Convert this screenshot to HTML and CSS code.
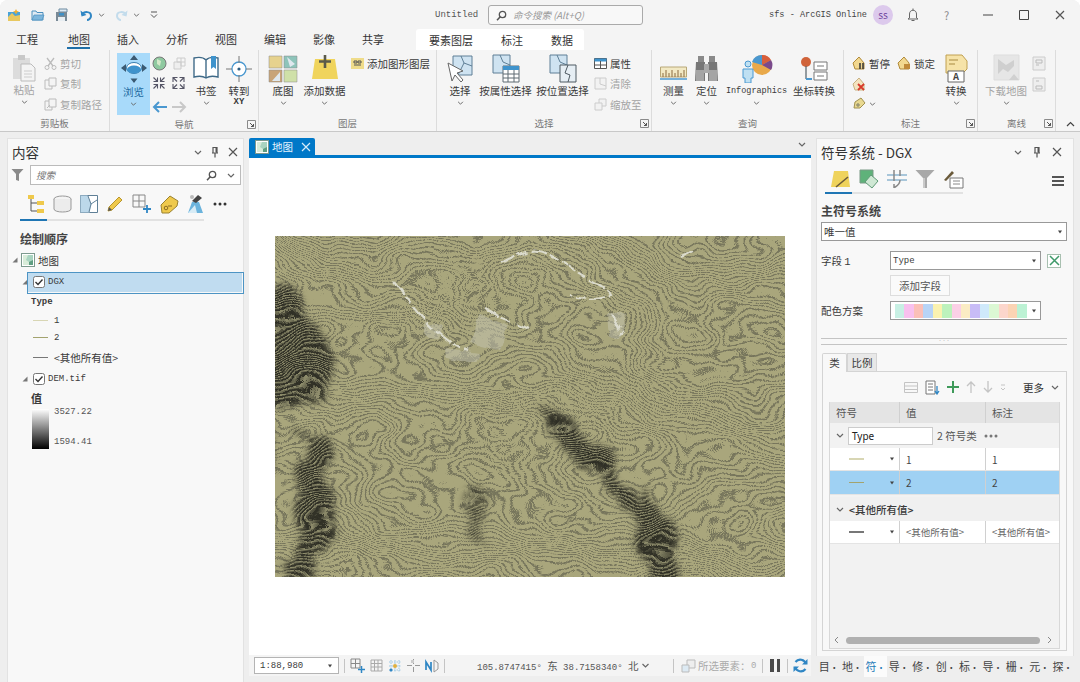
FILE: index.html
```html
<!DOCTYPE html>
<html lang="zh-CN">
<head>
  <meta charset="UTF-8">
  <title>Untitled - ArcGIS Pro</title>
  <link rel="stylesheet" href="styles.css">
</head>
<body>
<svg class="defs" width="0" height="0">
  <symbol id="chev" viewBox="0 0 8 5"><path d="M1 1l3 3 3-3" fill="none" stroke="#666" stroke-width="1.2"/></symbol>
  <symbol id="caret" viewBox="0 0 6 4"><path d="M1 0.5h4l-2 3z" fill="#444"/></symbol>
  <symbol id="tri" viewBox="0 0 6 6"><path d="M5.5 0.5v5h-5z" fill="#777"/></symbol>
  <symbol id="launch" viewBox="0 0 9 9"><path d="M0.5 0.5h8v8h-8z" fill="none" stroke="#8a8a8a"/><path d="M3 3l3.5 3.5M6.5 4v2.500h-2.500" fill="none" stroke="#555"/></symbol>
  <symbol id="close" viewBox="0 0 10 10"><path d="M1 1l8 8M9 1l-8 8" stroke="#555" stroke-width="1.200"/></symbol>
  <symbol id="pin" viewBox="0 0 8 11"><path d="M2 0.500h4v5.500h-4zM1 6h6M4 6v4.500" fill="none" stroke="#555" stroke-width="1.200"/><path d="M4.500 1h1.500v4.500h-1.500z" fill="#555"/></symbol>
  <symbol id="mapicon" viewBox="0 0 14 14"><rect x="0.500" y="0.500" width="13" height="13" fill="#fff" stroke="#7d9a8e"/><rect x="2" y="2" width="10" height="10" fill="#a9d4c0"/><path d="M2 2h5l-2 5 3 2v3h-6z" fill="#d8ecd9"/><path d="M8 9l4-2v5h-4z" fill="#5f9e82"/></symbol>
  <symbol id="check" viewBox="0 0 12 12"><rect x="0.500" y="0.500" width="11" height="11" rx="2" fill="#fff" stroke="#777"/><path d="M2.500 6l2.500 2.500 4.500-5" fill="none" stroke="#333" stroke-width="1.400"/></symbol>
  <symbol id="dots" viewBox="0 0 14 4"><circle cx="2" cy="2" r="1.500"/><circle cx="7" cy="2" r="1.500"/><circle cx="12" cy="2" r="1.500"/></symbol>
</svg>

<div class="app">
  <!-- title bar -->
  <div class="titlebar">
    <div class="qat">
      <svg width="14" height="13" viewBox="0 0 14 13"><path d="M1 3h12v9h-12z" fill="#4aa3d8"/><path d="M1 8l4-4 3 3 5-1v6h-12z" fill="#e8c860"/><path d="M9 0l1 2 2 .5-2 1-1 2-1-2-2-1 2-.5z" fill="#f0b030"/></svg>
      <svg width="14" height="12" viewBox="0 0 14 12"><path d="M1 2h4l1 1.500h6v7.500h-11z" fill="#dfeaf3" stroke="#4a8fbe"/><path d="M1 11l2-5h10l-2 5z" fill="#7db6dc" stroke="#4a8fbe" stroke-width=".7"/></svg>
      <svg width="15" height="14" viewBox="0 0 15 14"><path d="M4 1h8v3h-8z" fill="#dfeaf3" stroke="#6d8aa0"/><path d="M1 4h11v9h-11z" fill="#7a8a96"/><path d="M3 9h7v4h-7z" fill="#e8eef2"/><path d="M4 5h5v2.500h-5z" fill="#3d8fc6"/></svg>
      <span class="qat-arrows">
        <svg width="13" height="12" viewBox="0 0 13 12"><path d="M2 6c2-4 9-4 9 1 0 2-2 4-4 4" fill="none" stroke="#2f86c4" stroke-width="2"/><path d="M0.500 1.500l1 6 5-1.500z" fill="#2f86c4"/></svg>
        <svg class="ch" width="7" height="4"><use href="#chev"/></svg>
      </span>
      <span class="qat-arrows">
        <svg width="13" height="12" viewBox="0 0 13 12"><path d="M11 6c-2-4-9-4-9 1 0 2 2 4 4 4" fill="none" stroke="#c3dcec" stroke-width="2"/><path d="M12.500 1.500l-1 6-5-1.500z" fill="#c3dcec"/></svg>
        <svg class="ch" width="7" height="4"><use href="#chev"/></svg>
      </span>
      <svg width="8" height="8" viewBox="0 0 8 8"><path d="M1 1h6M1 3.500l3 3 3-3" fill="none" stroke="#555"/></svg>
    </div>
    <span class="doc-name latin">Untitled</span>
    <div class="cmd-search">
      <svg width="11" height="11" viewBox="0 0 11 11"><circle cx="6.500" cy="4.500" r="3.200" fill="none" stroke="#555" stroke-width="1.300"/><path d="M4 7l-3 3.200" stroke="#555" stroke-width="1.500"/></svg>
      <span>命令搜索 (Alt+Q)</span>
    </div>
    <div class="title-right">
      <span class="user latin">sfs - ArcGIS Online</span>
      <span class="avatar">SS</span>
      <svg class="bell" width="12" height="14" viewBox="0 0 12 14"><path d="M6 0.500v1.500M2.500 10v-4c0-5 7-5 7 0v4l1.500 1h-10zM4.500 12.500h3" fill="none" stroke="#666"/></svg>
      <span class="help">?</span>
      <span class="win-btns">
        <svg width="10" height="10" viewBox="0 0 10 10"><path d="M0 5h10" stroke="#444"/></svg>
        <svg width="10" height="10" viewBox="0 0 10 10"><path d="M0.500 0.500h9v9h-9z" fill="none" stroke="#444"/></svg>
        <svg width="10" height="10"><use href="#close"/></svg>
      </span>
    </div>
  </div>

  <!-- ribbon tabs -->
  <div class="tabs">
    <span class="tab">工程</span>
    <span class="tab active">地图</span>
    <span class="tab">插入</span>
    <span class="tab">分析</span>
    <span class="tab">视图</span>
    <span class="tab">编辑</span>
    <span class="tab">影像</span>
    <span class="tab">共享</span>
    <div class="ctx-tabs">
      <span>要素图层</span>
      <span>标注</span>
      <span>数据</span>
    </div>
  </div>

  <!-- ribbon -->
  <div class="ribbon">
    <div class="group g-clip">
      <div class="group-body">
        <div class="big off w-paste">
          <svg width="26" height="29" viewBox="0 0 26 29"><path d="M2 5h17v21h-17z" fill="#dcdcdc"/><path d="M7 2h7v5h-7z" fill="#c8c8c8"/><path d="M10 11h10l4 4v13h-14z" fill="#f4f4f4" stroke="#bbb"/><path d="M13 18h8M13 21h8M13 24h8" stroke="#ccc"/></svg>
          <span>粘贴</span>
          <svg class="ch" width="7" height="4"><use href="#chev"/></svg>
        </div>
        <div class="smalls off">
          <div class="small"><svg width="13" height="13" viewBox="0 0 13 13"><path d="M3 1l6 8M10 1l-6 8" stroke="#bbb" stroke-width="1.300"/><circle cx="3" cy="10.500" r="2" fill="none" stroke="#bbb"/><circle cx="10" cy="10.500" r="2" fill="none" stroke="#bbb"/></svg><span>剪切</span></div>
          <div class="small"><svg width="13" height="13" viewBox="0 0 13 13"><path d="M1 3h7v9h-7z" fill="#f4f4f4" stroke="#bbb"/><path d="M5 1h7v8h-7z" fill="#f4f4f4" stroke="#bbb"/></svg><span>复制</span></div>
          <div class="small"><svg width="13" height="13" viewBox="0 0 13 13"><path d="M1 3h7v9h-7z" fill="#f4f4f4" stroke="#bbb"/><path d="M5 1h7v8h-7z" fill="#f4f4f4" stroke="#bbb"/><path d="M3 10l3-3" stroke="#bbb"/></svg><span>复制路径</span></div>
        </div>
      </div>
      <div class="group-foot">剪贴板</div>
    </div>

    <div class="group g-nav">
      <div class="group-body">
        <div class="big explore">
          <svg width="28" height="30" viewBox="0 0 28 30"><ellipse cx="14" cy="14" rx="7.500" ry="5.500" fill="#fff" stroke="#3a7fb0"/><ellipse cx="14" cy="15.500" rx="7" ry="4" fill="#3f93cc"/><path d="M14 1l4 5h-8zM14 29l-3.500-4.500h7zM1 14l5-4v8zM27 14l-5-4v8z" fill="#3b5a72"/></svg>
          <span>浏览</span>
          <svg class="ch" width="7" height="4"><use href="#chev"/></svg>
        </div>
        <div class="nav-tools">
          <div class="nav-row">
            <svg width="15" height="15" viewBox="0 0 15 15"><circle cx="7.500" cy="7.500" r="6.500" fill="#8fc9a0" stroke="#777"/><path d="M5 3l4 2-1 5-3-2z" fill="#d5e9c9"/></svg>
            <svg width="15" height="15" viewBox="0 0 15 15"><path d="M5 2h8v8h-8z" fill="none" stroke="#ccc"/><path d="M2 6h7v7h-7z" fill="#eee" stroke="#ccc"/><path d="M9 2v8M5 6h8" stroke="#ccc"/></svg>
          </div>
          <div class="zoom-arrows">
            <svg width="34" height="14" viewBox="0 0 34 14" fill="none" stroke="#556" stroke-width="1.100"><path d="M1.500 1.500l3.500 3.500M5.500 1.500v4h-4M12.500 1.500l-3.500 3.500M8.500 1.500v4h4M1.500 12.500l3.500-3.500M5.500 12.500v-4h-4M12.500 12.500l-3.500-3.500M8.500 12.500v-4h4M25 5.500l-3.500-3.500M21 6v-4.500h4.500M28 5.500l3.500-3.500M32 6v-4.500h-4.500M25 8.500l-3.500 3.500M21 8v4.500h4.500M28 8.500l3.500 3.500M32 8v4.500h-4.500"/></svg>
          </div>
          <div class="nav-row">
            <svg width="15" height="12" viewBox="0 0 15 12"><path d="M15 6H3M7 1L2 6l5 5" fill="none" stroke="#4a98d0" stroke-width="2"/></svg>
            <svg width="15" height="12" viewBox="0 0 15 12"><path d="M0 6h12M8 1l5 5-5 5" fill="none" stroke="#c8c8c8" stroke-width="2"/></svg>
          </div>
        </div>
        <div class="big w-book">
          <svg width="28" height="29" viewBox="0 0 28 29"><path d="M14 6c-3-3-8-3-12-2v19c4-1 9-1 12 1 3-2 8-2 12-1V4c-4-1-9-1-12 2zM14 6v18" fill="#fff" stroke="#3f6a88" stroke-width="1.400"/><path d="M19 2h5v13l-2.500-2-2.500 2z" fill="#3f93cc"/></svg>
          <span>书签</span>
          <svg class="ch" width="7" height="4"><use href="#chev"/></svg>
        </div>
        <div class="big w-goto">
          <svg width="28" height="29" viewBox="0 0 28 29"><circle cx="14" cy="15" r="7" fill="#fff" stroke="#4a98d0" stroke-width="1.300"/><circle cx="14" cy="15" r="1.600" fill="#2d5c80"/><path d="M14 2v7M14 21v7M1 15h6M21 15h6" stroke="#777"/></svg>
          <span>转到</span>
          <span class="sub latin">XY</span>
        </div>
      </div>
      <div class="group-foot">导航<svg class="launcher" width="9" height="9"><use href="#launch"/></svg></div>
    </div>

    <div class="group g-layer">
      <div class="group-body">
        <div class="big w-base">
          <svg width="30" height="29" viewBox="0 0 30 29"><path d="M1 2h13v12h-13z" fill="#e6d28e" stroke="#888" stroke-width=".5"/><path d="M16 2h13v12h-13z" fill="#8ec4ba" stroke="#888" stroke-width=".5"/><path d="M1 16h13v12h-13z" fill="#c8a478" stroke="#888" stroke-width=".5"/><path d="M16 16h13v12h-13z" fill="#cfe0a8" stroke="#888" stroke-width=".5"/><path d="M19 3l8 7-5 3zM4 27l8-9v9z" fill="#dfe8ee"/></svg>
          <span>底图</span>
          <svg class="ch" width="7" height="4"><use href="#chev"/></svg>
        </div>
        <div class="big w-add">
          <svg width="28" height="29" viewBox="0 0 28 29"><path d="M4 5h20l3 20H1z" fill="#f0d45c"/><path d="M14 1v13M8 7.500h12" stroke="#5a5a4a" stroke-width="2.600"/></svg>
          <span>添加数据</span>
          <svg class="ch" width="7" height="4"><use href="#chev"/></svg>
        </div>
        <div class="smalls">
          <div class="small"><svg width="13" height="11" viewBox="0 0 13 11"><path d="M0 0h13v11h-13z" fill="#efdc8a"/><path d="M3 3h3v2h-3zM7 3h3v2h-3zM3 7h7" fill="none" stroke="#555"/></svg><span>添加图形图层</span></div>
        </div>
      </div>
      <div class="group-foot">图层</div>
    </div>

    <div class="group g-sel">
      <div class="group-body">
        <div class="big w-sel1">
          <svg width="26" height="29" viewBox="0 0 26 29"><path d="M6 2h19v19h-19z" fill="#cfe3f1" stroke="#5f7f96"/><path d="M14 2l3 7 8 3M17 9l-6 12" fill="none" stroke="#5f7f96"/><path d="M1 9l4 18 3-6 6 7 2-2-6-7 6-2z" fill="#fff" stroke="#666"/></svg>
          <span>选择</span>
          <svg class="ch" width="7" height="4"><use href="#chev"/></svg>
        </div>
        <div class="big w-sel2">
          <svg width="28" height="29" viewBox="0 0 28 29"><path d="M1 1h17v18h-17z" fill="#cfe3f1" stroke="#5f7f96"/><path d="M8 1l3 7 7 3" fill="none" stroke="#5f7f96"/><path d="M11 12h16v16h-16z" fill="#fff" stroke="#5f6a72"/><path d="M11 12h16v4h-16z" fill="#3f93cc"/><path d="M11 20h16M11 24h16M16 16v12M22 16v12" stroke="#5f6a72"/></svg>
          <span>按属性选择</span>
        </div>
        <div class="big w-sel3">
          <svg width="28" height="29" viewBox="0 0 28 29"><path d="M1 1h17v18h-17z" fill="#cfe3f1" stroke="#5f7f96"/><path d="M8 1l3 7 7 3" fill="none" stroke="#5f7f96"/><path d="M11 11h16v17h-16z" fill="#e6eef4" stroke="#4f5a62"/><path d="M19 11l-3 8 5 2-2 7" fill="none" stroke="#4f5a62"/></svg>
          <span>按位置选择</span>
        </div>
        <div class="smalls">
          <div class="small"><svg width="13" height="11" viewBox="0 0 13 11"><path d="M0.500 0.500h12v10h-12z" fill="#fff" stroke="#555"/><path d="M0.500 0.500h12v3h-12z" fill="#3f93cc"/><path d="M0.500 7h12M6.500 3v8" stroke="#555"/></svg><span>属性</span></div>
          <div class="small off"><svg width="13" height="13" viewBox="0 0 13 13"><path d="M1 1h11v11h-11z" fill="#f2f2f2" stroke="#ccc"/><path d="M6 1v6l6 2" fill="none" stroke="#ccc"/></svg><span>清除</span></div>
          <div class="small off"><svg width="13" height="13" viewBox="0 0 13 13"><path d="M5 1h7v7h-7z" fill="#f2f2f2" stroke="#ccc"/><path d="M1 5h7v7h-7z" fill="#f2f2f2" stroke="#ccc"/></svg><span>缩放至</span></div>
        </div>
      </div>
      <div class="group-foot">选择<svg class="launcher" width="9" height="9"><use href="#launch"/></svg></div>
    </div>

    <div class="group g-query">
      <div class="group-body">
        <div class="big w-measure">
          <svg width="27" height="29" viewBox="0 0 27 29"><path d="M0.500 13h26v10h-26z" fill="#f2e9c4" stroke="#b8a878"/><path d="M3 19v4M6 16v7M9 19v4M12 16v7M15 19v4M18 16v7M21 19v4M24 16v7" stroke="#8a6a40"/><path d="M0 25h27" stroke="#4a98d0" stroke-width="1.500"/></svg>
          <span>测量</span>
          <svg class="ch" width="7" height="4"><use href="#chev"/></svg>
        </div>
        <div class="big w-locate">
          <svg width="27" height="29" viewBox="0 0 27 29"><path d="M5 2h6v6h-6zM16 2h6v6h-6z" fill="#8a8a8a"/><path d="M3 8h9v19h-10z" fill="#777"/><path d="M15 8h9l1 19h-10z" fill="#777"/><path d="M11 10h5v9h-5z" fill="#aaa"/><path d="M3 16h8v11h-8zM16 16h8v11h-8z" fill="#a5a5a5"/></svg>
          <span>定位</span>
          <svg class="ch" width="7" height="4"><use href="#chev"/></svg>
        </div>
        <div class="big w-info">
          <svg width="32" height="29" viewBox="0 0 32 29"><circle cx="21" cy="11" r="10" fill="#e9a94a"/><path d="M21 11V1a10 10 0 0 1 9 5z" fill="#d85f3c"/><path d="M21 11l9-5a10 10 0 0 1 0 10z" fill="#7a4a8c"/><path d="M21 11L11 8a10 10 0 0 1 10-7z" fill="#4a98d0"/><circle cx="7" cy="10" r="3" fill="#bfe0f2" stroke="#4a98d0"/><path d="M2 15h10v9h-2v5h-6v-5h-2z" fill="#bfe0f2" stroke="#4a98d0"/></svg>
          <span class="latin">Infographics</span>
          <svg class="ch" width="7" height="4"><use href="#chev"/></svg>
        </div>
        <div class="big w-coord">
          <svg width="28" height="29" viewBox="0 0 28 29"><circle cx="6" cy="8" r="5" fill="#d0633a"/><path d="M6 12v13" stroke="#5f6a72" stroke-width="1.300"/><path d="M6 25h6" stroke="#4a98d0" stroke-width="2"/><path d="M14 8h13v8h-13zM14 18h13v8h-13z" fill="#fff" stroke="#777"/><path d="M17 12h7M17 22h7" stroke="#777"/></svg>
          <span>坐标转换</span>
        </div>
      </div>
      <div class="group-foot">查询</div>
    </div>

    <div class="group g-label">
      <div class="group-body">
        <div class="label-tools">
          <div class="label-row">
            <div class="small"><svg width="14" height="14" viewBox="0 0 14 14"><path d="M1 7l6-6 5 6v6h-9z" fill="#f2d890" stroke="#b08a3a"/><path d="M8 7v6M11 7v6" stroke="#333" stroke-width="1.500"/></svg><span>暂停</span></div>
            <div class="small"><svg width="14" height="14" viewBox="0 0 14 14"><path d="M1 7l6-6 5 6v6h-9z" fill="#f2d890" stroke="#b08a3a"/><path d="M7 8h6v5h-6z" fill="#c08a3a"/></svg><span>锁定</span></div>
          </div>
          <div class="small"><svg width="14" height="14" viewBox="0 0 14 14"><path d="M1 7l6-6 5 6v6h-9z" fill="#f4e4c0" stroke="#c8b080"/><path d="M6 7l6 6M12 7l-6 6" stroke="#d83a2a" stroke-width="1.800"/></svg></div>
          <div class="small"><svg width="14" height="14" viewBox="0 0 14 14"><path d="M2 11l1-6 6-4 4 5-5 5z" fill="#e8d890" stroke="#a09050"/><circle cx="6" cy="8" r="1.200" fill="none" stroke="#776"/></svg><svg class="ch" width="7" height="4"><use href="#chev"/></svg></div>
        </div>
        <div class="big w-convert">
          <svg width="26" height="29" viewBox="0 0 26 29"><path d="M3 1h16l5 6v8l-4 4H3z" fill="#f6e3a8" stroke="#c0a050"/><path d="M6 6h9M6 10h6" stroke="#a88a40"/><path d="M5 17h16v11h-16z" fill="#fff" stroke="#666"/><text x="13" y="26" class="icon-letter">A</text></svg>
          <span>转换</span>
          <svg class="ch" width="7" height="4"><use href="#chev"/></svg>
        </div>
      </div>
      <div class="group-foot">标注<svg class="launcher" width="9" height="9"><use href="#launch"/></svg></div>
    </div>

    <div class="group g-off">
      <div class="group-body">
        <div class="big off w-dl">
          <svg width="27" height="29" viewBox="0 0 27 29"><path d="M1 1h25v25h-25z" fill="#e6e6e6" stroke="#ddd"/><path d="M5 5l8 6 8-5v6l-6 6-5-3-5 5z" fill="#cfcfcf"/><path d="M16 26l5-6 5 6z" fill="#d0d0d0"/></svg>
          <span>下载地图</span>
          <svg class="ch" width="7" height="4"><use href="#chev"/></svg>
        </div>
        <div class="off-tools">
          <svg width="14" height="15" viewBox="0 0 14 15"><path d="M1 1h12v13h-12z" fill="#eee" stroke="#ccc"/><path d="M4 4h6v3h-6zM4 9h3" fill="none" stroke="#bbb"/></svg>
          <svg width="14" height="15" viewBox="0 0 14 15"><path d="M1 1h12v13h-12z" fill="#eee" stroke="#ccc"/><path d="M4 9h6v3h-6zM4 4h3" fill="none" stroke="#bbb"/></svg>
        </div>
      </div>
      <div class="group-foot">离线<svg class="launcher" width="9" height="9"><use href="#launch"/></svg></div>
    </div>

    <svg class="collapse" width="9" height="6" viewBox="0 0 9 6"><path d="M1 5l3.500-3.500 3.500 3.500" fill="none" stroke="#444" stroke-width="1.200"/></svg>
  </div>

  <div class="main">
    <!-- contents pane -->
    <div class="pane left-pane">
      <div class="pane-head">
        <span class="pane-title">内容</span>
        <span class="pane-btns">
          <svg width="8" height="5"><use href="#chev"/></svg>
          <svg width="8" height="11"><use href="#pin"/></svg>
          <svg width="10" height="10"><use href="#close"/></svg>
        </span>
      </div>
      <div class="search-row">
        <svg width="13" height="14" viewBox="0 0 13 14"><path d="M0.500 1h12l-4.500 5v7l-3-1v-6z" fill="#8a8a8a"/></svg>
        <div class="search-box">
          <span>搜索</span>
          <svg class="mag" width="11" height="11" viewBox="0 0 11 11"><circle cx="6.500" cy="4.500" r="3.200" fill="none" stroke="#555" stroke-width="1.300"/><path d="M4 7l-3 3.200" stroke="#555" stroke-width="1.500"/></svg>
          <svg width="8" height="5"><use href="#chev"/></svg>
        </div>
      </div>
      <div class="view-icons">
        <svg width="20" height="20" viewBox="0 0 20 20"><path d="M3 1h6v4h-6zM12 7h7v4h-7zM12 15h7v4h-7z" fill="#efc94c"/><path d="M6 5v12h6M6 9h6" fill="none" stroke="#555"/></svg>
        <svg width="19" height="18" viewBox="0 0 19 18"><ellipse cx="9.500" cy="4" rx="8.500" ry="3" fill="#f4f4f4" stroke="#999"/><path d="M1 4v10c0 4 17 4 17 0V4" fill="#ececec" stroke="#999"/></svg>
        <svg width="18" height="18" viewBox="0 0 18 18"><path d="M0.500 0.500h17v17h-17z" fill="#fff" stroke="#5f7f96"/><path d="M0.500 0.500h7l4 9 -2 8h-9z" fill="#bcd8ea"/><path d="M8 1l3 8 6-4M11 9l-2 8" fill="none" stroke="#5f7f96"/></svg>
        <svg width="18" height="18" viewBox="0 0 18 18"><path d="M2 16l1-4L13 2l3 3L6 15z" fill="#efc94c" stroke="#b8962e"/><path d="M2 16l1-4 3 3z" fill="#555"/></svg>
        <svg width="20" height="20" viewBox="0 0 20 20"><path d="M1 1h12v12h-12zM7 1v12M1 7h12" fill="none" stroke="#888"/><path d="M15 11v8M11 15h8" stroke="#2f86c4" stroke-width="1.800"/></svg>
        <svg width="19" height="19" viewBox="0 0 19 19"><path d="M1 10l9-9 8 5-1 5-8 7H2z" fill="#efc94c" stroke="#9a8230"/><circle cx="6" cy="13" r="1.800" fill="none" stroke="#8a6a20"/><path d="M8 11h4" stroke="#8a6a20"/></svg>
        <svg width="17" height="20" viewBox="0 0 17 20"><path d="M1 19l4-11h7l4 11z" fill="#6bb3dc"/><path d="M8 11l2 8H1z" fill="#d8ecf6"/><path d="M5 7l6-6 4 3-6 5z" fill="#444"/><circle cx="5" cy="3" r="2" fill="#bbb"/></svg>
        <svg class="dots" width="14" height="4"><use href="#dots"/></svg>
      </div>
      <div class="view-line"><span></span></div>
      <div class="order-title">绘制顺序</div>
      <ul class="tree">
        <li class="node map-node">
          <svg class="t" width="6" height="6"><use href="#tri"/></svg>
          <svg width="14" height="14"><use href="#mapicon"/></svg>
          <span>地图</span>
        </li>
        <li class="node layer-node selected">
          <svg class="t" width="6" height="6"><use href="#tri"/></svg>
          <svg width="12" height="12"><use href="#check"/></svg>
          <span class="latin">DGX</span>
        </li>
        <li class="legend-head latin">Type</li>
        <li class="legend"><i class="ln ln-1"></i><span class="latin">1</span></li>
        <li class="legend"><i class="ln ln-2"></i><span class="latin">2</span></li>
        <li class="legend other"><i class="ln ln-3"></i><span>&lt;其他所有值&gt;</span></li>
        <li class="node layer-node dem">
          <svg class="t" width="6" height="6"><use href="#tri"/></svg>
          <svg width="12" height="12"><use href="#check"/></svg>
          <span class="latin">DEM.tif</span>
        </li>
        <li class="value-head">值</li>
        <li class="ramp">
          <i class="ramp-bar"></i>
          <span class="ramp-labels latin"><span>3527.22</span><span>1594.41</span></span>
        </li>
      </ul>
    </div>

    <!-- map view -->
    <div class="center">
      <div class="map-tabs">
        <div class="map-tab">
          <svg width="14" height="14"><use href="#mapicon"/></svg>
          <span>地图</span>
          <svg class="tab-x" width="10" height="10" viewBox="0 0 10 10"><path d="M1 1l8 8M9 1l-8 8" stroke="#d6ecfa" stroke-width="1.200"/></svg>
        </div>
        <svg class="tabs-menu" width="8" height="5"><use href="#chev"/></svg>
      </div>
      <div class="map-view">
        <svg class="map" width="510" height="341" viewBox="0 0 510 341">
          <defs>
            <pattern id="bands" width="6.500" height="6.500" patternUnits="userSpaceOnUse" patternTransform="rotate(14)">
              <rect width="6.500" height="6.500" fill="#a9a67c"/>
              <rect width="6.500" height="1.700" fill="#74735a"/>
            </pattern>
            <pattern id="dense-bands" width="4" height="4" patternUnits="userSpaceOnUse" patternTransform="rotate(-8)">
              <rect width="4" height="4" fill="#26261f"/>
              <rect width="4" height="1.500" fill="#8f8d6c"/>
            </pattern>
            <filter id="contour" x="-30%" y="-30%" width="160%" height="160%" color-interpolation-filters="sRGB">
              <feTurbulence type="fractalNoise" baseFrequency="0.006 0.009" numOctaves="4" seed="23" result="n"/>
              <feDisplacementMap in="SourceGraphic" in2="n" scale="190" xChannelSelector="R" yChannelSelector="G"/>
              <feGaussianBlur stdDeviation="0.450"/>
            </filter>
            <filter id="dense" x="-30%" y="-30%" width="160%" height="160%" color-interpolation-filters="sRGB">
              <feTurbulence type="fractalNoise" baseFrequency="0.012 0.016" numOctaves="3" seed="4" result="n"/>
              <feDisplacementMap in="SourceGraphic" in2="n" scale="70" xChannelSelector="R" yChannelSelector="G"/>
              <feGaussianBlur stdDeviation="0.350"/>
            </filter>
            <filter id="soft" x="-20%" y="-20%" width="140%" height="140%" color-interpolation-filters="sRGB">
              <feTurbulence type="fractalNoise" baseFrequency="0.035" numOctaves="3" seed="9"/>
              <feDisplacementMap in="SourceGraphic" scale="30" xChannelSelector="R" yChannelSelector="G"/>
              <feGaussianBlur stdDeviation="3"/>
            </filter>
            <filter id="rough" x="-10%" y="-10%" width="120%" height="120%" color-interpolation-filters="sRGB">
              <feTurbulence type="fractalNoise" baseFrequency="0.08" numOctaves="2" seed="3"/>
              <feDisplacementMap in="SourceGraphic" scale="7" xChannelSelector="R" yChannelSelector="G"/>
              <feGaussianBlur stdDeviation="0.500"/>
            </filter>
            <mask id="dark-zones">
              <g fill="#e8e8e8" filter="url(#soft)">
                <path d="M-10 50h22l22 25 22 35-2 45-30 15-34 5z"/>
                <path d="M-10 190h8v50h-8zM28 195l22 5 12 70-6 30-26 45h-14l4-70z"/>
                <path d="M262 172l30 12 22 22 30 30 16 24 20 30 30 55h-34l-26-70-30-35-34-30z"/>
                <path d="M368 250l26 26 8 40-20 10-12-30z"/>
                <path d="M190 250l8-8 14 40-6 30-10-10z" fill="#999"/>
              </g>
            </mask>
          </defs>
          <rect x="-150" y="-150" width="810" height="641" fill="url(#bands)" filter="url(#contour)"/>
          <g mask="url(#dark-zones)">
            <rect x="-150" y="-150" width="810" height="641" fill="url(#dense-bands)" filter="url(#dense)"/>
          </g>
          <g class="patches" filter="url(#rough)">
            <path d="M205 78l28 12-8 25-30-8zM170 112l36 5-5 10-30-4zM332 78h20l-6 24h-12zM150 85l18 5-4 14-14-5z"/>
          </g>
          <g class="ridges" filter="url(#rough)">
            <path d="M119 45c15 20 30 40 45 52s20 15 30 18"/>
            <path d="M226 27c12-6 25-14 38-12s35 20 50 28 20 12 22 16c-12 6-28 4-42 1"/>
            <path d="M211 73c8 3 15 10 22 12s14 5 20 8"/>
            <path d="M336 80l12 18M405 20l14-6"/>
          </g>
        </svg>
      </div>
      <div class="statusbar">
        <div class="scale-box latin"><span>1:88,980</span><svg width="6" height="4"><use href="#caret"/></svg></div>
        <i class="sep"></i>
        <svg width="15" height="15" viewBox="0 0 15 15"><path d="M1 1h9v9h-9zM5.500 1v9M1 5.500h9" fill="none" stroke="#888"/><path d="M11.500 8v7M8 11.500h7" stroke="#2f86c4" stroke-width="1.500"/></svg>
        <svg width="13" height="13" viewBox="0 0 13 13"><path d="M1 1h11v11h-11zM1 4.500h11M1 8h11M4.500 1v11M8 1v11" fill="none" stroke="#aaa"/></svg>
        <svg width="14" height="14" viewBox="0 0 14 14"><path d="M1 3h12M1 7h12M1 11h12M3 1v12M7 1v12M11 1v12" stroke="#9cc8e4" stroke-dasharray="1.500 1"/><circle cx="7" cy="7" r="2" fill="#e0b040"/><circle cx="3" cy="11" r="1.500" fill="#2f86c4"/></svg>
        <svg width="13" height="13" viewBox="0 0 13 13"><path d="M6.500 0v5M6.500 8v5M0 6.500h5M8 6.500h5" stroke="#999"/><rect x="4" y="1" width="3" height="3" fill="#ccc"/></svg>
        <svg width="14" height="14" viewBox="0 0 14 14"><path d="M9 1v12l4-3V4z" fill="none" stroke="#999"/><path d="M1 11V3l5 8V3" fill="none" stroke="#2f86c4" stroke-width="1.700"/></svg>
        <i class="sep"></i>
        <span class="coords latin">105.8747415° <b>东</b> 38.7158340° <b>北</b></span>
        <svg class="coord-ch" width="9" height="5"><use href="#chev"/></svg>
        <i class="sep push"></i>
        <svg class="sel-ic" width="16" height="14" viewBox="0 0 16 14"><path d="M6 1h8v8h-8z" fill="#eee" stroke="#bbb"/><path d="M1 6h7v7h-7z" fill="#ddeaf3" stroke="#bbb"/></svg>
        <span class="sel-text">所选要素：</span>
        <span class="sel-num latin">0</span>
        <i class="sep"></i>
        <span class="pause"><i></i><i></i></span>
        <i class="sep"></i>
        <svg width="15" height="15" viewBox="0 0 15 15"><path d="M13 6A6 6 0 0 0 2.500 4" fill="none" stroke="#2f86c4" stroke-width="2.200"/><path d="M9 6.500h5.500V1z" fill="#2f86c4"/><path d="M2 9a6 6 0 0 0 10.500 2" fill="none" stroke="#2f86c4" stroke-width="2.200"/><path d="M6 8.500H.5V14z" fill="#2f86c4"/></svg>
      </div>
    </div>

    <!-- symbology pane -->
    <div class="right-col">
      <div class="pane right-pane">
        <div class="pane-head">
          <span class="pane-title">符号系统 - DGX</span>
          <span class="pane-btns wide">
            <svg width="8" height="5"><use href="#chev"/></svg>
            <svg width="8" height="11"><use href="#pin"/></svg>
            <svg width="10" height="10"><use href="#close"/></svg>
          </span>
        </div>
        <div class="sym-icons">
          <svg width="20" height="20" viewBox="0 0 20 20"><path d="M3 2h14l2 16H0z" fill="#efd35c"/><path d="M5 18L17 8" stroke="#6a5a3a" stroke-width="1.600"/></svg>
          <svg width="20" height="20" viewBox="0 0 20 20"><path d="M1 1h13v13H1z" fill="#5fb27a" stroke="#7a9a86"/><path d="M12 6l7 6-6 7-7-6z" fill="#cfe8d4" stroke="#5f9a76"/></svg>
          <svg width="20" height="20" viewBox="0 0 20 20"><path d="M0 6h20M0 11h20" stroke="#a8c6da" stroke-width="2"/><path d="M7 1v11M13 1v6M13 11c0 6-6 7-6 8M7 15v4" fill="none" stroke="#888" stroke-width="1.500"/></svg>
          <svg width="20" height="20" viewBox="0 0 20 20"><path d="M0.500 1h19l-7.500 8v10h-4V9z" fill="#a8a8a8"/><path d="M8 9h2v10H8z" fill="#cacaca"/></svg>
          <svg width="21" height="20" viewBox="0 0 21 20"><path d="M1 11l8-9 2 2-8 8z" fill="#6a5a3a"/><path d="M7 9h13v10H7z" fill="#fff" stroke="#777"/><path d="M10 12h7M10 15h7" stroke="#888"/></svg>
          <span class="burger"><i></i><i></i><i></i></span>
        </div>
        <div class="view-line sym-line"><span></span></div>
        <div class="sym-title">主符号系统</div>
        <div class="select full"><span>唯一值</span><svg width="6" height="4"><use href="#caret"/></svg></div>
        <div class="field-row first">
          <label>字段 <span class="latin">1</span></label>
          <div class="select field"><span class="latin">Type</span><svg width="6" height="4"><use href="#caret"/></svg></div>
          <span class="x-btn"><svg width="11" height="11" viewBox="0 0 11 11"><path d="M1 1l9 9M10 1l-9 9" stroke="#3f9a6a" stroke-width="1.500"/></svg></span>
        </div>
        <div class="add-field">添加字段</div>
        <div class="field-row">
          <label>配色方案</label>
          <div class="select field ramp-select">
            <span class="swatches"><i class="s1"></i><i class="s2"></i><i class="s3"></i><i class="s4"></i><i class="s5"></i><i class="s6"></i><i class="s7"></i><i class="s8"></i><i class="s9"></i><i class="s10"></i><i class="s11"></i><i class="s12"></i><i class="s13"></i><i class="s14"></i></span>
            <svg width="6" height="4"><use href="#caret"/></svg>
          </div>
        </div>
        <div class="splitter"><span>•••</span></div>
        <div class="sub-tabs">
          <span class="sub-tab on">类</span>
          <span class="sub-tab">比例</span>
        </div>
        <div class="class-box">
          <div class="class-tools">
            <svg width="14" height="11" viewBox="0 0 14 11"><path d="M0.500 0.500h13v10h-13zM0.500 4h13M0.500 7.500h13" fill="none" stroke="#c4c4c4"/></svg>
            <svg width="15" height="15" viewBox="0 0 15 15"><path d="M1 1h9v13H1z" fill="#fff" stroke="#777"/><path d="M3 4h5M3 7h5M3 10h5" stroke="#777"/><path d="M12 6v8M10 11l2 3 2-3" fill="none" stroke="#2f86c4" stroke-width="1.300"/></svg>
            <svg width="12" height="12" viewBox="0 0 12 12"><path d="M6 0v12M0 6h12" stroke="#3f9a5a" stroke-width="2"/></svg>
            <svg width="10" height="12" viewBox="0 0 10 12"><path d="M5 12V1M1 5l4-4 4 4" fill="none" stroke="#c4c4c4" stroke-width="1.300"/></svg>
            <svg width="10" height="12" viewBox="0 0 10 12"><path d="M5 0v11M1 7l4 4 4-4" fill="none" stroke="#c4c4c4" stroke-width="1.300"/></svg>
            <svg width="6" height="8" viewBox="0 0 6 8"><path d="M1 2h4M1 5l2 2 2-2" fill="none" stroke="#c4c4c4"/></svg>
            <span class="more">更多</span>
            <svg width="8" height="5"><use href="#chev"/></svg>
          </div>
          <div class="class-table">
            <div class="row thead"><span>符号</span><span>值</span><span>标注</span></div>
            <div class="group-row">
              <svg width="8" height="5"><use href="#chev"/></svg>
              <span class="type-input">Type</span>
              <span class="count">2 符号类</span>
              <svg class="ell" width="14" height="4"><use href="#dots"/></svg>
            </div>
            <div class="row data">
              <span class="sym"><i class="ln ln-1"></i><svg width="6" height="4"><use href="#caret"/></svg></span><span>1</span><span>1</span>
            </div>
            <div class="row data picked">
              <span class="sym"><i class="ln ln-2"></i><svg width="6" height="4"><use href="#caret"/></svg></span><span>2</span><span>2</span>
            </div>
            <div class="group-row other-head">
              <svg width="8" height="5"><use href="#chev"/></svg>
              <span>&lt;其他所有值&gt;</span>
            </div>
            <div class="row data small-cjk">
              <span class="sym"><i class="ln ln-3"></i><svg width="6" height="4"><use href="#caret"/></svg></span><span>&lt;其他所有值&gt;</span><span>&lt;其他所有值&gt;</span>
            </div>
            <div class="table-empty"></div>
            <div class="hscroll">
              <svg width="5" height="8" viewBox="0 0 5 8"><path d="M4 1L1 4l3 3" fill="none" stroke="#888"/></svg>
              <i></i>
              <svg width="5" height="8" viewBox="0 0 5 8"><path d="M1 1l3 3-3 3" fill="none" stroke="#888"/></svg>
            </div>
          </div>
        </div>
      </div>
      <div class="dock-tabs">
        <span>目<b>·</b></span><span>地<b>·</b></span><span class="on">符<b>·</b></span><span>导<b>·</b></span><span>修<b>·</b></span><span>创<b>·</b></span><span>标<b>·</b></span><span>导<b>·</b></span><span>栅<b>·</b></span><span>元<b>·</b></span><span>探<b>·</b></span>
      </div>
    </div>
  </div>
</div>
</body>
</html>
```

FILE: styles.css
```css
* {
  margin: 0;
  padding: 0;
  box-sizing: border-box;
}

html, body {
  width: 1080px;
  height: 682px;
  overflow: hidden;
  background: #fff;
}

body {
  font-family: "Noto Sans CJK SC", "Noto Sans", sans-serif;
  font-size: 10.5px;
  color: #3a3a3a;
}

svg {
  flex: none;
  display: block;
}

i {
  display: block;
  font-style: normal;
}

.defs {
  position: absolute;
}

.latin {
  font-family: "Liberation Mono", "Noto Sans CJK SC", monospace;
}

.app {
  width: 1080px;
  height: 682px;
  background: #eeeeee;
  border-radius: 8px 8px 0 0;
  display: flex;
  flex-direction: column;
  overflow: hidden;
}

/* title bar */
.titlebar {
  height: 28px;
  flex: none;
  background: #f4f4f4;
  display: flex;
  align-items: center;
  padding: 2px 0 0 7px;
}

.qat {
  width: 167px;
  display: flex;
  align-items: center;
  gap: 10px;
  margin-right: 261px;
  flex: none;
}

.qat-arrows {
  display: flex;
  align-items: center;
  gap: 5px;
}

.doc-name {
  width: 53px;
  flex: none;
  font-size: 9px;
  color: #555;
}

.cmd-search {
  width: 155px;
  height: 20px;
  flex: none;
  display: flex;
  align-items: center;
  gap: 6px;
  padding-left: 7px;
  background: #f8f8f8;
  border: 1px solid #aaa;
  border-radius: 3px;
  color: #999;
  font-size: 9.5px;
  font-style: italic;
}

.title-right {
  display: flex;
  align-items: center;
  margin-left: 126px;
}

.user {
  font-size: 8.600px;
  color: #444;
  width: 104px;
  flex: none;
}

.avatar {
  width: 20px;
  height: 20px;
  border-radius: 50%;
  background: #dcc9ec;
  color: #6a3d9a;
  font-size: 8px;
  display: flex;
  align-items: center;
  justify-content: center;
  margin-right: 14px;
}

.help {
  margin-left: 25px;
  color: #888;
  font-size: 11px;
  width: 37px;
}

.win-btns {
  display: flex;
  gap: 26px;
  align-items: center;
  margin-left: 2px;
}

/* ribbon tabs */
.tabs {
  height: 22px;
  flex: none;
  background: #f4f4f4;
  display: flex;
  align-items: center;
  padding-left: 16px;
  font-size: 11px;
  color: #333;
}

.tab {
  width: 49px;
  flex: none;
  height: 22px;
  line-height: 22px;
  position: relative;
}

.tab:first-child {
  width: 52px;
}

.tab.active::after {
  content: "";
  position: absolute;
  left: -1px;
  top: 19px;
  width: 23px;
  height: 2px;
  background: #1f6fa8;
}

.ctx-tabs {
  margin-left: 5px;
  width: 168px;
  height: 21px;
  background: #fff;
  display: flex;
  align-items: center;
  gap: 28px;
  padding: 1px 0 0 13px;
  border-radius: 3px 3px 0 0;
}

/* ribbon */
.ribbon {
  height: 82px;
  flex: none;
  background: #f5f5f5;
  border-bottom: 1px solid #c8c8c8;
  display: flex;
  position: relative;
}

.group {
  flex: none;
  display: flex;
  flex-direction: column;
  padding-top: 3px;
  border-right: 1px solid #dcdcdc;
}

.g-clip { width: 110px; }
.g-nav { width: 149px; }
.g-layer { width: 178px; }
.g-sel { width: 215px; }
.g-query { width: 192px; }
.g-label { width: 134px; }
.g-off { width: 78px; }

.group-body {
  flex: 1;
  display: flex;
}

.group-foot {
  height: 15px;
  text-align: center;
  font-size: 9.5px;
  color: #777;
  position: relative;
  line-height: 15px;
}

.launcher {
  position: absolute;
  right: 2px;
  top: 3px;
}

.big {
  display: flex;
  flex-direction: column;
  align-items: center;
  flex: none;
  height: 62px;
  line-height: 14px;
  white-space: nowrap;
}

.big > svg:first-child {
  margin-bottom: 1px;
}

.big .ch,
.label-tools .ch {
  margin-top: 3px;
}

.big .sub {
  font-size: 9px;
  line-height: 9px;
  font-weight: bold;
}

.off,
.off .small {
  color: #a4a4a4;
}

.smalls {
  display: flex;
  flex-direction: column;
  flex: none;
}

.small {
  display: flex;
  align-items: center;
  gap: 3px;
  height: 20.500px;
  white-space: nowrap;
  flex: none;
}

.w-paste { width: 36px; margin-left: 6px; margin-right: 2px; }
.explore {
  width: 33px;
  margin-left: 7px;
  background: #a8dafa;
  color: #1d6aa0;
  padding-top: 1px;
}
.nav-tools {
  width: 35px;
  margin: 0 5px 0 2px;
  flex: none;
}
.nav-row {
  display: flex;
  justify-content: space-between;
  height: 20px;
  align-items: center;
}
.zoom-arrows {
  height: 22px;
  padding-top: 3px;
}
.nav-row + .zoom-arrows + .nav-row {
  margin-top: 2px;
}
.w-book { width: 28px; margin-right: 5px; padding-top: 1px; }
.w-goto { width: 28px; padding-top: 1px; }
.w-base { width: 30px; margin: 0 6px 0 9px; padding-top: 1px; }
.w-add { width: 41px; margin-right: 6px; padding-top: 1px; }
.w-sel1 { width: 26px; margin: 0 6px 0 10px; padding-top: 1px; }
.w-sel2 { width: 53px; padding-top: 1px; }
.w-sel3 { width: 53px; margin: 0 1px 0 4px; padding-top: 1px; }
.w-measure { width: 27px; margin: 0 6px 0 8px; padding-top: 1px; }
.w-locate { width: 27px; margin-right: 5px; padding-top: 1px; }
.w-info { width: 63px; margin-right: 5px; padding-top: 1px; font-size: 9px; }
.w-info span { font-size: 8.500px; line-height: 14px; }
.w-coord { width: 42px; padding-top: 1px; }
.w-convert { width: 26px; margin-left: 8px; padding-top: 1px; }
.w-dl { width: 42px; margin-left: 7px; padding-top: 1px; }

.g-sel .smalls { margin-left: 4px; }
.g-clip .smalls { margin-left: 0; }

.label-tools {
  margin-left: 8px;
  width: 83px;
  flex: none;
}

.label-row {
  display: flex;
  gap: 7px;
}

.label-tools .small .ch {
  margin-top: 0;
}

.icon-letter {
  font-family: "Liberation Mono", monospace;
  font-size: 10px;
  font-weight: bold;
  text-anchor: middle;
  fill: #444;
}

.off-tools {
  margin-left: 5px;
  display: flex;
  flex-direction: column;
  gap: 6px;
  padding-top: 3px;
}

.collapse {
  position: absolute;
  left: 1066px;
  top: 71px;
}

/* main area */
.main {
  flex: 1;
  display: flex;
  min-height: 0;
}

.pane {
  background: #f8f8f8;
  border: 1px solid #e2e2e2;
  border-bottom: none;
}

.left-pane {
  width: 237px;
  margin: 6px 0 0 7px;
  flex: none;
}

.pane-head {
  height: 26px;
  display: flex;
  align-items: center;
  padding: 0 5px 0 4px;
}

.pane-title {
  font-size: 13.500px;
  color: #333;
  white-space: nowrap;
}

.pane-btns {
  margin-left: auto;
  display: flex;
  align-items: center;
  gap: 9px;
}

.pane-btns.wide {
  gap: 11px;
  margin-right: 2px;
}

.search-row {
  display: flex;
  align-items: center;
  gap: 6px;
  padding-left: 3px;
}

.search-box {
  width: 211px;
  height: 20px;
  background: #fff;
  border: 1px solid #bbb;
  display: flex;
  align-items: center;
  padding: 0 5px;
  color: #777;
  font-style: italic;
  font-size: 9.500px;
}

.search-box .mag {
  margin: 0 10px 0 auto;
}

.view-icons {
  display: flex;
  align-items: center;
  gap: 8px;
  height: 30px;
  margin-top: 4px;
  padding-left: 17px;
}

.dots {
  fill: #333;
  margin-left: 1px;
}

.view-line {
  height: 2px;
  width: 184px;
  margin-left: 12px;
  background: #e2e2e2;
}

.view-line span {
  display: block;
  height: 2px;
  width: 27px;
  background: #1f76b4;
}

.order-title {
  font-size: 12px;
  font-weight: 700;
  color: #444;
  margin: 9px 0 0 12px;
  line-height: 17px;
}

.tree {
  list-style: none;
}

.node {
  display: flex;
  align-items: center;
  gap: 3px;
  height: 20px;
}

.map-node {
  margin-top: 3px;
  padding-left: 4px;
}

.layer-node {
  padding-left: 14px;
  margin-top: 2px;
  font-size: 9px;
}

.layer-node .t {
  margin-right: 2px;
}

.selected {
  background: linear-gradient(#c0dcf0, #c0dcf0) no-repeat 19px 0 / 215px 20px;
  position: relative;
}

.selected::after {
  content: "";
  position: absolute;
  left: 19px;
  top: 0;
  width: 215px;
  height: 20px;
  border: 1px solid #4d94c4;
}

.legend-head {
  font-size: 9px;
  font-weight: bold;
  padding-left: 23px;
  line-height: 19px;
  margin-top: 1px;
}

.legend {
  display: flex;
  align-items: center;
  gap: 6px;
  padding-left: 25px;
  height: 17px;
  font-size: 9px;
}

.legend.other {
  height: 23px;
  font-size: 10.500px;
}

.ln {
  width: 15px;
  height: 1.500px;
  flex: none;
}

.ln-1 { background: #d8d6b4; }
.ln-2 { background: #a3a36e; }
.ln-3 { background: #777; }

.dem {
  margin-top: 0;
}

.value-head {
  font-size: 11px;
  font-weight: 700;
  padding-left: 23px;
  line-height: 18px;
}

.ramp {
  display: flex;
  gap: 5px;
  padding-left: 24px;
  height: 40px;
  margin-top: 2px;
}

.ramp-bar {
  width: 17px;
  height: 40px;
  background: linear-gradient(#fff, #000);
}

.ramp-labels {
  display: flex;
  flex-direction: column;
  justify-content: space-between;
  font-size: 9px;
  color: #555;
  line-height: 12px;
  height: 42px;
  margin-top: -3px;
}

/* map */
.center {
  width: 562px;
  margin-left: 5px;
  flex: none;
  display: flex;
  flex-direction: column;
}

.map-tabs {
  height: 26px;
  flex: none;
  padding-top: 6px;
  display: flex;
  align-items: flex-start;
  border-bottom: 3px solid #0078c8;
}

.map-tab {
  width: 66px;
  height: 17px;
  background: #0078c8;
  color: #e4f3fd;
  display: flex;
  align-items: center;
  gap: 3px;
  padding-left: 6px;
  border-radius: 2px 2px 0 0;
  font-size: 10.500px;
  white-space: nowrap;
}

.tab-x {
  margin-left: 5px;
}

.tabs-menu {
  margin: 4px 5px 0 auto;
}

.map-view {
  flex: 1;
  background: #fff;
  display: flex;
  align-items: center;
  justify-content: center;
  min-height: 0;
}

.ridges {
  fill: none;
  stroke: #e2e2d6;
  stroke-width: 2.200;
  stroke-dasharray: 16 3 9 5;
  opacity: .9;
}

.patches {
  fill: #c4c3ad;
  opacity: .55;
}

.statusbar {
  height: 21px;
  flex: none;
  background: #f4f4f4;
  display: flex;
  align-items: center;
  gap: 5px;
  padding-left: 5px;
  margin-bottom: 6px;
}

.scale-box {
  width: 85px;
  height: 17px;
  flex: none;
  background: #fff;
  border: 1px solid #b4b4b4;
  display: flex;
  align-items: center;
  justify-content: space-between;
  padding: 0 5px;
  font-size: 9px;
}

.sep {
  width: 1px;
  height: 14px;
  background: #c4c4c4;
  flex: none;
}

.coords {
  margin-left: 27px;
  font-size: 9px;
  color: #555;
  white-space: nowrap;
  width: 159px;
  flex: none;
}

.coords b {
  font-family: "Noto Sans CJK SC", sans-serif;
  font-weight: 400;
  font-size: 10.500px;
}

.push {
  margin-left: 18px;
}

.sel-ic {
  margin-left: 2px;
}

.sel-text {
  margin-left: -4px;
  color: #aaa;
  width: 48px;
  flex: none;
  white-space: nowrap;
}

.sel-num {
  color: #aaa;
  font-size: 9px;
  margin-right: 1px;
}

.pause {
  display: flex;
  gap: 3px;
  margin: 0 2px;
}

.pause i {
  width: 3.500px;
  height: 13px;
  background: #4a4a4a;
}

/* symbology */
.right-col {
  width: 258px;
  margin: 6px 0 0 5px;
  flex: none;
  display: flex;
  flex-direction: column;
}

.right-pane {
  flex: 1;
  padding: 0 6px 0 4px;
  min-height: 0;
  display: flex;
  flex-direction: column;
}

.right-pane .pane-head {
  padding: 0 3px 0 0;
  height: 26px;
  flex: none;
}

.sym-icons {
  display: flex;
  align-items: center;
  gap: 8px;
  height: 27px;
  padding-left: 10px;
  flex: none;
}

.burger {
  margin-left: auto;
  margin-right: 3px;
  width: 12px;
  display: flex;
  flex-direction: column;
  gap: 2px;
  padding-top: 5px;
}

.burger i {
  height: 2px;
  background: #555;
}

.sym-line {
  margin-left: 4px;
  width: 138px;
  flex: none;
  height: 2px;
}

.sym-title {
  font-size: 12px;
  font-weight: 700;
  color: #444;
  line-height: 17px;
  margin-top: 8px;
  flex: none;
}

.select {
  height: 19px;
  background: #fff;
  border: 1px solid #999;
  display: flex;
  align-items: center;
  justify-content: space-between;
  padding: 0 3px 0 2px;
  flex: none;
}

.select.full {
  width: 246px;
  margin-top: 3px;
}

.field-row {
  display: flex;
  align-items: center;
  margin-top: 5px;
  flex: none;
}

.field-row.first {
  margin-top: 10px;
}

.field-row label {
  width: 69px;
  flex: none;
  font-size: 10.500px;
}

.field {
  width: 151px;
  font-size: 9px;
}

.x-btn {
  width: 14px;
  height: 14px;
  margin-left: 6px;
  border: 1px solid #a8c0b0;
  display: flex;
  align-items: center;
  justify-content: center;
  background: #fff;
}

.add-field {
  width: 60px;
  height: 21px;
  margin: 5px 0 0 69px;
  background: #fafafa;
  border: 1px solid #ddd;
  text-align: center;
  line-height: 19px;
  color: #555;
  flex: none;
}

.ramp-select {
  padding-left: 4px;
}

.swatches {
  display: flex;
  height: 14px;
  width: 132px;
}

.swatches i { flex: 1; }
.s1 { background: #c8f0e4; }
.s2 { background: #f8c0ee; }
.s3 { background: #fbc0b8; }
.s4 { background: #b8d4f6; }
.s5 { background: #faf2b0; }
.s6 { background: #bdf2bc; }
.s7 { background: #fbd0e6; }
.s8 { background: #fbecc4; }
.s9 { background: #c8bcf6; }
.s10 { background: #cfe9fa; }
.s11 { background: #dcf8d4; }
.s12 { background: #fcd6cc; }
.s13 { background: #fbd4b4; }
.s14 { background: #bcf2d4; }

.splitter {
  width: 246px;
  height: 7px;
  margin-top: 18px;
  border-top: 1px solid #c4c4c4;
  border-bottom: 1px solid #c4c4c4;
  text-align: center;
  font-size: 4px;
  line-height: 5px;
  color: #aaa;
  flex: none;
}

.sub-tabs {
  display: flex;
  margin: 8px 0 0 1px;
  height: 18px;
  flex: none;
}

.sub-tab {
  width: 30px;
  text-align: center;
  line-height: 17px;
  background: #e8e8e8;
  border: 1px solid #d4d4d4;
  border-bottom: none;
}

.sub-tab.on {
  width: 25px;
  background: #f8f8f8;
  border-radius: 2px 2px 0 0;
  height: 19px;
  position: relative;
}

.class-box {
  width: 245px;
  flex: 1;
  margin: 0 0 5px 1px;
  border: 1px solid #d4d4d4;
  padding: 0 6px 1px;
  display: flex;
  flex-direction: column;
  min-height: 0;
}

.class-tools {
  height: 30px;
  flex: none;
  display: flex;
  align-items: center;
  gap: 7px;
  justify-content: flex-end;
  padding-right: 1px;
}

.more {
  margin-left: 10px;
  color: #333;
}

.class-table {
  flex: 1;
  display: flex;
  flex-direction: column;
  background: #f2f2f2;
  border: 1px solid #d8d8d8;
  border-top: none;
  min-height: 0;
}

.row {
  display: grid;
  grid-template-columns: 69px 86px 1fr;
  flex: none;
}

.row > span {
  padding-left: 6px;
  display: flex;
  align-items: center;
  white-space: nowrap;
}

.thead {
  height: 21px;
  background: #e4e4e4;
  color: #555;
}

.thead > span + span,
.data > span + span {
  border-left: 1px solid #d0d0d0;
}

.group-row {
  height: 25px;
  display: flex;
  align-items: center;
  padding-left: 6px;
  gap: 5px;
  flex: none;
}

.type-input {
  width: 85px;
  height: 18px;
  background: #fff;
  border: 1px solid #ccc;
  font-family: "Noto Sans", sans-serif;
  font-size: 10px;
  line-height: 16px;
  padding-left: 3px;
  margin-left: -1px;
  color: #222;
}

.count {
  color: #555;
  margin-left: -1px;
}

.ell {
  fill: #777;
  margin-left: 2px;
}

.data {
  height: 23px;
  background: #fff;
  border-bottom: 1px solid #e4e4e4;
  font-size: 10px;
  color: #444;
}

.data .sym {
  padding-left: 19px;
  gap: 25px;
}

.picked {
  background: #9fd1f3;
  height: 24px;
}

.other-head {
  background: #f0f0f0;
  margin-top: 2px;
  height: 24px;
  font-weight: 500;
}

.small-cjk {
  font-size: 9.500px;
  color: #666;
}

.table-empty {
  flex: 1;
}

.hscroll {
  height: 14px;
  flex: none;
  display: flex;
  align-items: center;
  gap: 7px;
  padding: 0 7px 2px 4px;
}

.hscroll i {
  flex: 1;
  height: 7px;
  border-radius: 4px;
  background: #b0b0b0;
}

.dock-tabs {
  height: 21px;
  flex: none;
  margin: 0 0 5px 1px;
  display: flex;
  font-size: 11px;
  color: #444;
  background: #eeeeee;
}

.dock-tabs span {
  width: 23.400px;
  flex: none;
  text-align: center;
  line-height: 20px;
}

.dock-tabs b {
  font-weight: 400;
  font-size: 9px;
}

.dock-tabs .on {
  background: #fbfbfb;
  color: #1f7ab8;
}
```
